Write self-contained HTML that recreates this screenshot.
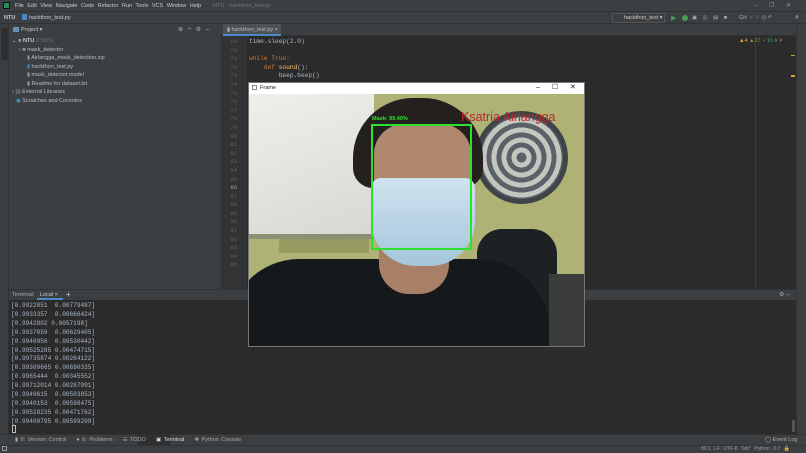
<!DOCTYPE html>
<html><head><style>
*{margin:0;padding:0;box-sizing:border-box}
body{width:806px;height:453px;overflow:hidden;background:#2b2b2b;font-family:"Liberation Sans",sans-serif;font-size:5.5px;color:#bbb;position:relative}
.a{position:absolute}
.mono{font-family:"Liberation Mono",monospace}
</style></head><body>
<div class="a" style="left:0;top:0;width:806px;height:11px;background:#3c3f41"></div>
<div class="a" style="left:3px;top:2px;width:7px;height:7px;background:#2e8b57;border:1px solid #111"></div>
<div class="a" style="left:15px;top:3px;color:#ccc;word-spacing:2px">File Edit View Navigate Code Refactor Run Tools VCS Window Help</div>
<div class="a" style="left:213px;top:3px;color:#777">NTU - hackthon_test.py</div>
<div class="a" style="left:754px;top:2px;color:#999;font-size:6px;word-spacing:10px">– ❐ ✕</div>
<div class="a" style="left:0;top:11px;width:806px;height:13px;background:#3c3f41;border-top:1px solid #323232;border-bottom:1px solid #323232"></div>
<div class="a" style="left:4px;top:15px;color:#ccc;font-weight:bold">NTU</div>
<div class="a" style="left:22px;top:14px;width:5px;height:6px;background:#4a88c7"></div>
<div class="a" style="left:29px;top:15px;color:#ccc">hackthon_test.py</div>
<div class="a" style="left:612px;top:13px;width:53px;height:10px;border:1px solid #555;background:#3c3f41"></div>
<div class="a" style="left:624px;top:15px;color:#ccc">hackthon_test ▾</div>
<div class="a" style="left:671px;top:14px;color:#499c54;font-size:7px">▶</div>
<div class="a" style="left:682px;top:15px;width:6px;height:6px;border-radius:50%;background:#499c54"></div>
<div class="a" style="left:692px;top:15px;color:#aaa;word-spacing:4px">▣ ◎ ▤ ■</div>
<div class="a" style="left:739px;top:15px;color:#aaa">Git: <span style="color:#4a9fd8">✓</span> <span style="color:#499c54">✓</span> ◷ ↶</div>
<div class="a" style="left:795px;top:14px;color:#ddd;font-size:7px">⌕</div>
<div class="a" style="left:0;top:24px;width:9px;height:421px;background:#3c3f41;border-right:1px solid #323232"></div>
<div class="a" style="left:1px;top:28px;width:7px;height:32px;background:#2d2f30"></div>
<div class="a" style="left:9px;top:24px;width:212px;height:265px;background:#3c3f41"></div>
<div class="a" style="left:13px;top:27px;width:6px;height:5px;background:#6a8fb5"></div>
<div class="a" style="left:21px;top:27px;color:#ccc">Project ▾</div>
<div class="a" style="left:178px;top:26px;color:#aaa;word-spacing:3px;font-size:6px">⊕ ÷ ⚙ –</div>
<div class="a" style="left:12px;top:37px;line-height:8.5px;color:#bbb">
<div>⌄ <span style="color:#8a9aa8">■</span> <b style="color:#ccc">NTU</b> <span style="color:#777">Z:\NTU</span></div>
<div style="padding-left:7px">› <span style="color:#8a9aa8">■</span> mask_detector</div>
<div style="padding-left:15px"><span style="color:#8a9aa8">▮</span> Airlangga_mask_detection.zip</div>
<div style="padding-left:15px"><span style="color:#4a88c7">▮</span> hackthon_test.py</div>
<div style="padding-left:15px"><span style="color:#999">▮</span> mask_detector.model</div>
<div style="padding-left:15px"><span style="color:#999">▮</span> Readme for dataset.txt</div>
<div>› <span style="color:#8a9aa8">▥</span> External Libraries</div>
<div style="padding-left:4px"><span style="color:#4a9fd8">◉</span> Scratches and Consoles</div>
</div>
<div class="a" style="left:221px;top:24px;width:575px;height:12px;background:#3c3f41;border-bottom:1px solid #323232"></div>
<div class="a" style="left:223px;top:24px;width:58px;height:12px;background:#4e5254;border-bottom:2px solid #4a88c7"></div>
<div class="a" style="left:227px;top:27px;color:#bbb">▮ hackthon_test.py ×</div>
<div class="a" style="left:221px;top:36px;width:26px;height:253px;background:#313335"></div>
<div class="a mono" style="left:223px;top:38px;line-height:8.6px;font-size:5.5px;color:#606366;width:14px;text-align:right">
69<br>70<br>71<br>72<br>73<br>74<br>75<br>76<br>77<br>78<br>79<br>80<br>81<br>82<br>83<br>84<br>85<br><span style="color:#a4a3a3">86</span><br>87<br>88<br>89<br>90<br>91<br>92<br>93<br>94<br>95</div>
<div class="a mono" style="left:249px;top:38px;line-height:8.6px;font-size:6.2px;color:#a9b7c6;white-space:pre">time.sleep(2.0)

<span style="color:#cc7832">while True:</span>
    <span style="color:#cc7832">def</span> <span style="color:#ffc66d">sound</span>():
        beep.beep()</div>
<div class="a" style="left:755px;top:36px;width:1px;height:253px;background:#3a3a3a"></div>
<div class="a" style="left:739px;top:38px;font-size:5.5px"><span style="color:#e0b13a">▲4</span> <span style="color:#a08a3a">▲27</span> <span style="color:#499c54">✓10</span> ˄ ˅</div>
<div class="a" style="left:791px;top:55px;width:4px;height:1px;background:#c9a33a"></div>
<div class="a" style="left:791px;top:75px;width:4px;height:2px;background:#c9a33a"></div>
<div class="a" style="left:796px;top:24px;width:10px;height:421px;background:#3c3f41;border-left:1px solid #323232"></div>
<div class="a" style="left:9px;top:289px;width:787px;height:11px;background:#3c3f41;border-top:1px solid #323232"></div>
<div class="a" style="left:12px;top:292px;color:#aaa">Terminal:</div>
<div class="a" style="left:37px;top:290px;width:26px;height:10px;border-bottom:2px solid #4a88c7"></div>
<div class="a" style="left:40px;top:292px;color:#ccc">Local ×</div>
<div class="a" style="left:66px;top:290px;color:#ccc;font-size:8px">+</div>
<div class="a" style="left:779px;top:291px;color:#aaa;font-size:6px">⚙ –</div>
<div class="a mono" style="left:11px;top:302px;line-height:8.9px;font-size:6.1px;color:#a9b7c6;white-space:pre">[0.9922851  0.00779487]
[0.9933357  0.00666424]
[0.9942802 0.0057198]
[0.9937059  0.00629405]
[0.9946956  0.00530442]
[0.99525285 0.00474715]
[0.99735874 0.00264122]
[0.99309665 0.00690335]
[0.9965444  0.00345552]
[0.99712014 0.00287991]
[0.9949615  0.00503853]
[0.9940153  0.00598475]
[0.99528235 0.00471762]
[0.99400795 0.00599209]</div>
<div class="a" style="left:12px;top:425px;width:4px;height:8px;border:1px solid #bbb"></div>
<div class="a" style="left:792px;top:420px;width:3px;height:12px;background:#555"></div>
<div class="a" style="left:0;top:434px;width:806px;height:11px;background:#3c3f41;border-top:1px solid #323232"></div>
<div class="a" style="left:138px;top:434px;width:32px;height:11px;background:#2d2f30"></div>
<div class="a" style="left:15px;top:437px;color:#aaa;word-spacing:1px">▮ 9: Version Control &nbsp;&nbsp; ● 6: Problems &nbsp;&nbsp; ☰ TODO &nbsp;&nbsp; <span style="color:#ddd">▣ Terminal</span> &nbsp;&nbsp; ✚ Python Console</div>
<div class="a" style="left:765px;top:437px;color:#aaa">◯ Event Log</div>
<div class="a" style="left:0;top:445px;width:806px;height:8px;background:#3c3f41;border-top:1px solid #323232"></div>
<div class="a" style="left:2px;top:446px;width:5px;height:5px;border:1px solid #999"></div>
<div class="a" style="left:701px;top:446px;color:#999;font-size:5px;word-spacing:2px">86:1 LF UTF-8 Tab* Python 3.7 🔓</div>
<div class="a" style="left:248px;top:82px;width:337px;height:265px;background:#fff;border:1px solid #777;overflow:hidden">
 <div class="a" style="left:3px;top:2px;width:5px;height:5px;border:1px solid #888"></div>
 <div class="a" style="left:11px;top:2px;color:#222">Frame</div>
 <div class="a" style="left:287px;top:0px;color:#222;font-size:7px;word-spacing:10px">– ☐ ✕</div>
 <div class="a" style="left:0;top:11px;width:337px;height:253px;background:#aeb275;overflow:hidden">
  <div class="a" style="left:0;top:0;width:125px;height:142px;background:linear-gradient(160deg,#eef0ea,#d6d8d2)"></div>
  <div class="a" style="left:0;top:140px;width:125px;height:5px;background:#8d8f74"></div>
  <div class="a" style="left:30px;top:145px;width:90px;height:14px;background:#979b62"></div>
  <div class="a" style="left:226px;top:17px;width:93px;height:93px;border-radius:50%;background:repeating-radial-gradient(circle,#5a6168 0 5px,#c4c6c0 5px 10px);border:5px solid #3f4448"></div>
  <div class="a" style="left:228px;top:135px;width:80px;height:118px;border-radius:25px 25px 0 0;background:#1e2124"></div>
  <div class="a" style="left:300px;top:180px;width:37px;height:73px;background:#3a3d3a"></div>
  <div class="a" style="left:-20px;top:165px;width:320px;height:120px;border-radius:70px 70px 0 0;background:#16191b"></div>
  <div class="a" style="left:130px;top:150px;width:70px;height:50px;background:#a88068;border-radius:0 0 30px 30px"></div>
  <div class="a" style="left:104px;top:4px;width:130px;height:90px;border-radius:60px 60px 20px 20px;background:#23201e"></div>
  <div class="a" style="left:125px;top:30px;width:97px;height:110px;border-radius:30px 30px 45px 45px;background:#b08870"></div>
  <div class="a" style="left:122px;top:84px;width:104px;height:88px;border-radius:10px 10px 45px 45px;background:linear-gradient(#cfe2ef,#a5c6dc)"></div>
 </div>
 <div class="a" style="left:122px;top:41px;width:101px;height:126px;border:2px solid #2fe02f"></div>
 <div class="a" style="left:123px;top:33px;color:#2fe02f;font-weight:bold;font-size:5.5px">Mask: 99.40%</div>
 <div class="a" style="left:212px;top:27px;color:#b82828;font-size:12.5px">Ksatria Airlangga</div>
</div>
</body></html>
